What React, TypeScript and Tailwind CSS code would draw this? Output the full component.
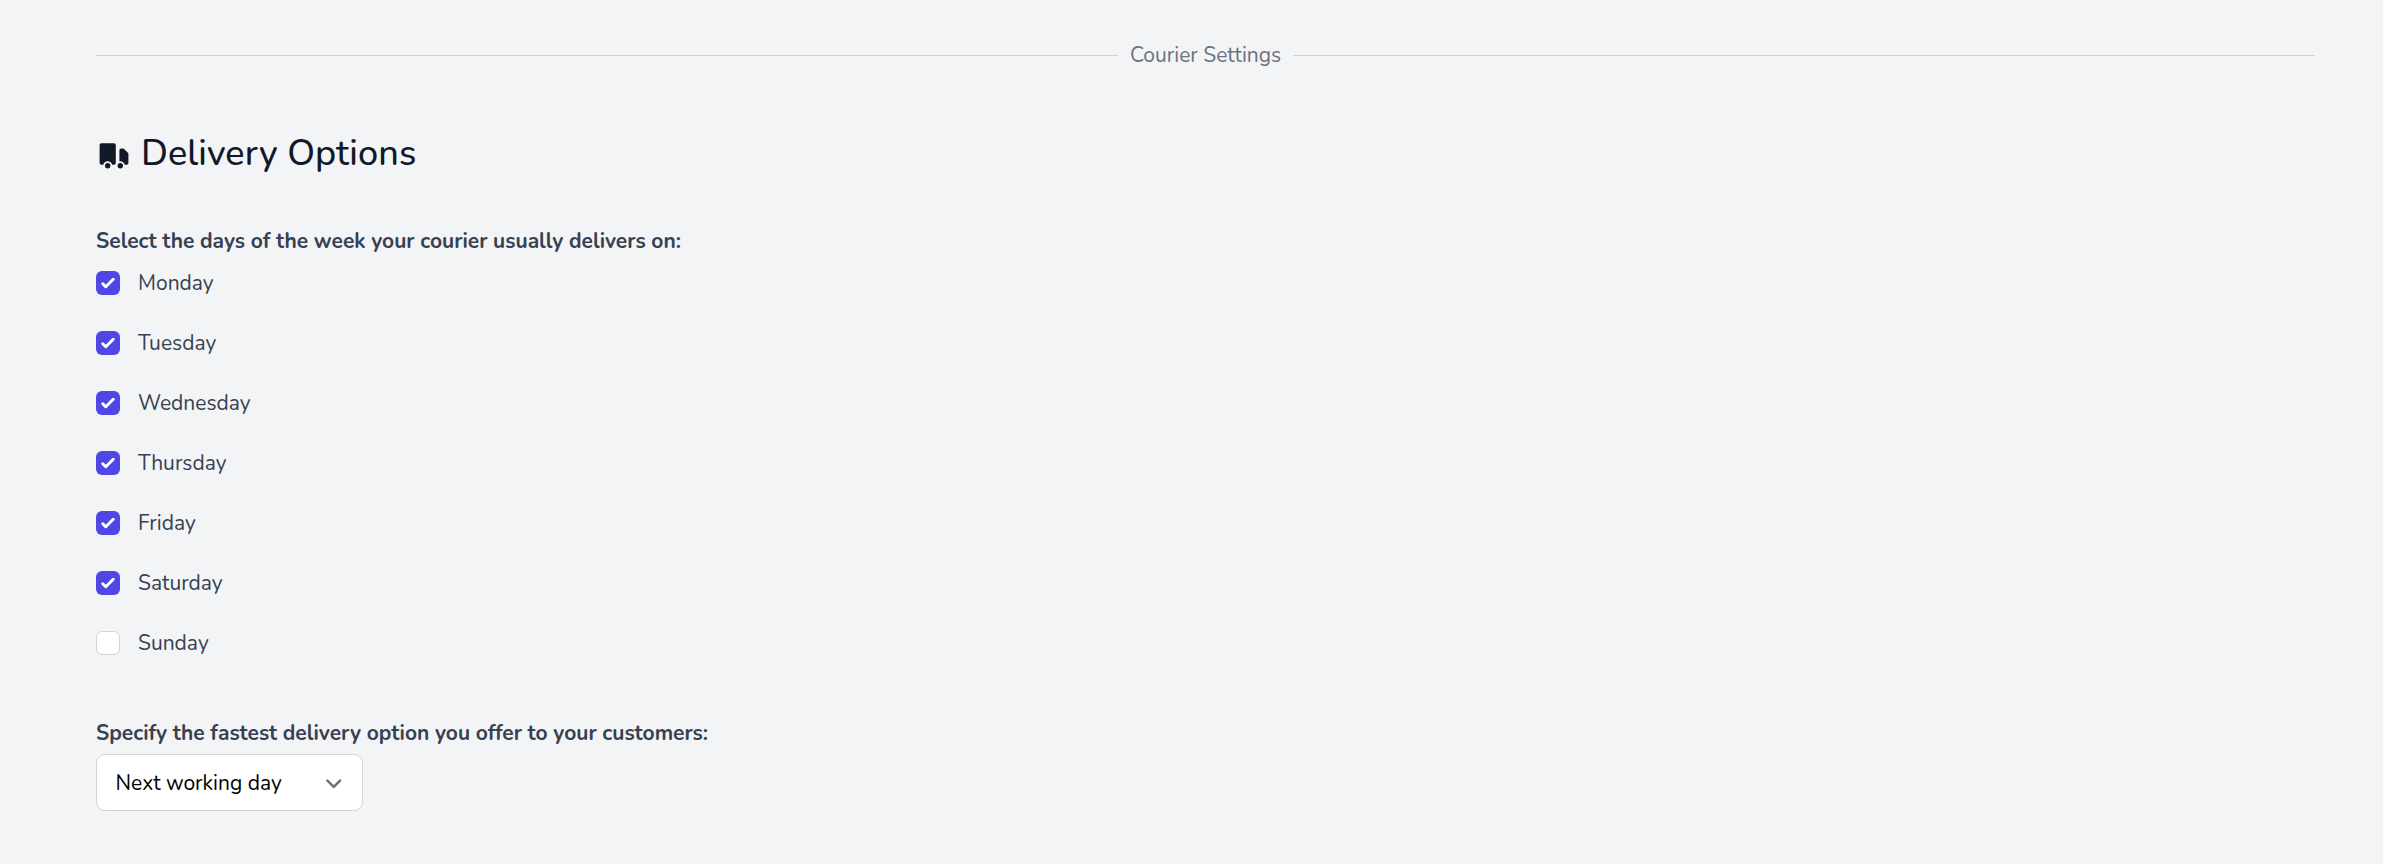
const days = [
  { name: 'Monday', on: true },
  { name: 'Tuesday', on: true },
  { name: 'Wednesday', on: true },
  { name: 'Thursday', on: true },
  { name: 'Friday', on: true },
  { name: 'Saturday', on: true },
  { name: 'Sunday', on: false },
];

function Truck() {
  return (
    <svg viewBox="0 0 20 20" fill="currentColor" className="size-9 shrink-0">
      <path d="M8 16.5a1.5 1.5 0 11-3 0 1.5 1.5 0 013 0zM15 16.5a1.5 1.5 0 11-3 0 1.5 1.5 0 013 0z" />
      <path d="M3 4a1 1 0 00-1 1v10a1 1 0 001 1h1.05a2.5 2.5 0 014.9 0H10a1 1 0 001-1V5a1 1 0 00-1-1H3zM14 7a1 1 0 00-1 1v6.05A2.5 2.5 0 0115.95 16H17a1 1 0 001-1v-5a1 1 0 00-.293-.707l-2-2A1 1 0 0015 7h-1z" />
    </svg>
  );
}

function Checkbox({ on }: { on: boolean }) {
  if (!on) return <span className="size-6 rounded-[6px] border border-[#d1d5db] bg-white" />;
  return (
    <span className="size-6 rounded-[6px] bg-[#4f46e5]">
      <svg viewBox="0 0 16 16" fill="white" className="size-6">
        <path d="M12.207 4.793a1 1 0 010 1.414l-5 5a1 1 0 01-1.414 0l-2-2a1 1 0 011.414-1.414L6.5 9.086l4.293-4.293a1 1 0 011.414 0z" />
      </svg>
    </span>
  );
}

export default function App() {
  return (
    <div className="h-[864px] bg-[#f3f4f6] pt-10 pr-[68px] pl-24 font-['Nunito','Lato',sans-serif] text-[21px] leading-[30px] text-[#374151]">
      <div className="flex items-center">
        <div className="mt-px h-px flex-1 bg-[#d0d2d5]" />
        <span className="px-3 text-[#6b7280]">Courier Settings</span>
        <div className="mt-px h-px flex-1 bg-[#d0d2d5]" />
      </div>

      <h1 className="mt-[56px] flex h-[54px] items-center text-[36px] font-medium text-[#111827]">
        <span className="pt-0.5"><Truck /></span>
        <span className="ml-[9px] pt-[2px] tracking-[0.1px]">Delivery Options</span>
      </h1>

      <p className="mt-[46px] font-bold">Select the days of the week your courier usually delivers on:</p>
      <div className="mt-[12px] flex flex-col gap-[30px]">
        {days.map((d) => (
          <label key={d.name} className="flex h-[30px] items-center gap-[18px]">
            <Checkbox on={d.on} />
            <span>{d.name}</span>
          </label>
        ))}
      </div>

      <p className="mt-[60px] font-bold">Specify the fastest delivery option you offer to your customers:</p>
      <button className="mt-[6px] flex h-[57px] w-[267px] items-center justify-between rounded-[9px] border border-[#d1d5db] bg-white pt-px pr-[13px] pl-[18.5px] text-black">
        <span>Next working day</span>
        <svg viewBox="0 0 20 20" fill="none" stroke="#6b7280" strokeWidth="1.6" strokeLinecap="round" strokeLinejoin="round" className="mt-[1.5px] size-[31.5px]">
          <path d="M6 8l4 4 4-4" />
        </svg>
      </button>
    </div>
  );
}
